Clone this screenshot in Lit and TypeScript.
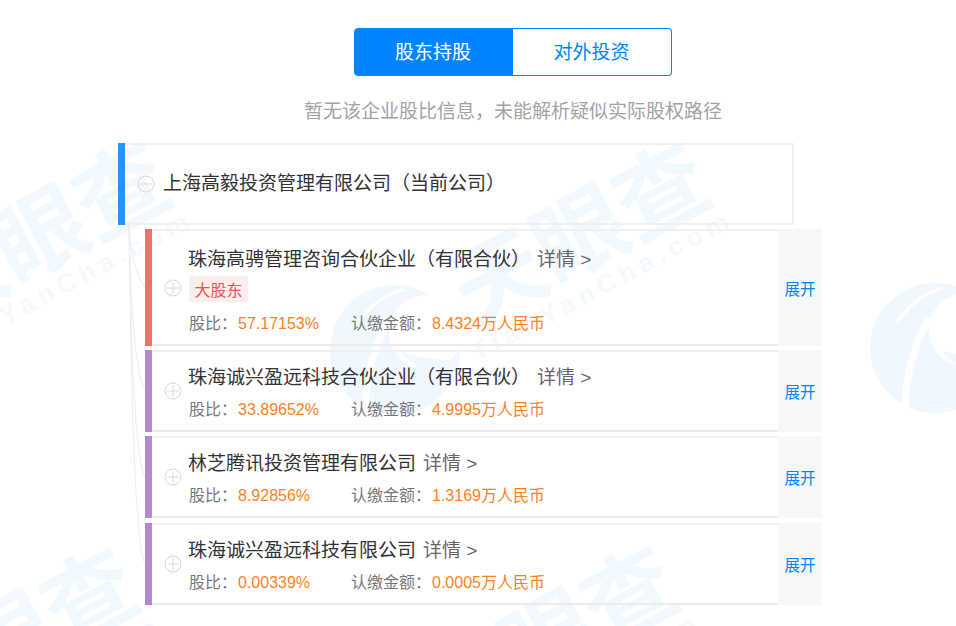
import { LitElement, html, css, svg } from "lit";
import { customElement } from "lit/decorators.js";

interface Row {
  name: string;
  ratio: string;
  amount: string;
  color: "red" | "purple";
  big?: boolean;
}

const ROWS: Row[] = [
  { name: "珠海高骋管理咨询合伙企业（有限合伙）", ratio: "57.17153%", amount: "8.4324万人民币", color: "red", big: true },
  { name: "珠海诚兴盈远科技合伙企业（有限合伙）", ratio: "33.89652%", amount: "4.9995万人民币", color: "purple" },
  { name: "林芝腾讯投资管理有限公司", ratio: "8.92856%", amount: "1.3169万人民币", color: "purple" },
  { name: "珠海诚兴盈远科技有限公司", ratio: "0.00339%", amount: "0.0005万人民币", color: "purple" },
];

const MARKS = [
  [43, 223],
  [583, 223],
  [11, 629],
  [551, 627],
];
const LOGOS = [
  [395, 350],
  [935, 348],
];
const LINES = [288, 391, 477, 564];

@customElement("app-root")
export class AppRoot extends LitElement {
  static styles = css`
    :host {
      display: block;
      position: relative;
      height: 626px;
      overflow: hidden;
      background: #fff;
      font-family: "Liberation Sans", "Noto Sans CJK SC", sans-serif;
    }
    .bg {
      position: absolute;
      left: 0;
      top: 0;
      pointer-events: none;
    }
    .mark-main {
      font-size: 92px;
      font-weight: 700;
      fill: #f1f8fe;
      text-anchor: middle;
    }
    .mark-url {
      font-size: 26px;
      font-weight: 700;
      letter-spacing: 6px;
      fill: #f3f9fe;
      text-anchor: middle;
    }
    .page {
      position: relative;
      padding-top: 28px;
    }
    .head {
      width: 718px;
      margin-left: 154px;
      display: flex;
      flex-direction: column;
      align-items: center;
    }
    .tabs {
      display: flex;
      width: 318px;
      height: 48px;
    }
    .tab {
      display: flex;
      align-items: center;
      justify-content: center;
      font-size: 19px;
      box-sizing: border-box;
      border: 1px solid #0084ff;
      padding-bottom: 4px;
    }
    .tab.on {
      width: 159px;
      padding-right: 1px;
      background: #0084ff;
      color: #fff;
      border-radius: 4px 0 0 4px;
    }
    .tab.off {
      width: 159px;
      padding-right: 1px;
      color: #0084ff;
      border-left: 0;
      border-radius: 0 4px 4px 0;
    }
    .tip {
      margin-top: 23px;
      font-size: 19px;
      line-height: 26px;
      color: #a3a3a3;
      white-space: nowrap;
    }
    .tree {
      margin: 18px 0 0 118px;
      width: 704px;
    }
    .root {
      width: 676px;
      height: 82px;
      box-sizing: border-box;
      display: flex;
      align-items: stretch;
      border: 2px solid #f0f0f0;
      border-left: 0;
      color: #333;
      font-size: 19px;
    }
    .root-bar {
      flex: none;
      width: 7px;
      margin: -2px 0;
      background: #2196ff;
    }
    .root-main {
      flex: 1;
      display: flex;
      align-items: center;
      gap: 8px;
      padding-left: 12px;
    }
    .root-main span {
      margin-bottom: 5px;
    }
    .toggle {
      flex: none;
      width: 18px;
      height: 18px;
    }
    .toggle circle,
    .toggle path {
      fill: none;
      stroke: #d8d8d8;
      stroke-width: 1;
    }
    .items {
      margin: 4px 0 0 27px;
      width: 677px;
      display: flex;
      flex-direction: column;
      gap: 4px;
    }
    .item {
      display: flex;
      align-items: stretch;
      border-top: 2px solid #f0f0f0;
      border-bottom: 2px solid #ebebeb;
      box-sizing: border-box;
      height: 82px;
    }
    .item.big {
      height: 117px;
    }
    .item:last-child {
      margin-top: 1px;
    }
    .bar {
      flex: none;
      width: 7px;
      margin: -2px 0;
    }
    .bar.red {
      background: #e87566;
    }
    .bar.purple {
      background: #b489d4;
    }
    .side {
      flex: none;
      width: 37px;
      display: flex;
      align-items: center;
      justify-content: center;
      padding-left: 4px;
      box-sizing: border-box;
    }
    .body {
      flex: 1;
      padding-top: 13px;
    }
    .big .body {
      padding-top: 16px;
    }
    .title {
      display: flex;
      gap: 7px;
      margin-left: -1px;
      font-size: 19px;
      line-height: 26px;
      color: #333;
      white-space: nowrap;
    }
    .more {
      color: #666;
    }
    .tag {
      display: flex;
      align-items: center;
      justify-content: center;
      width: 59px;
      height: 26px;
      margin-top: 3px;
      border-radius: 2px;
      background: #fdeeed;
      color: #e5574d;
      font-size: 16px;
    }
    .meta {
      display: flex;
      margin-top: 6px;
      font-size: 16px;
      line-height: 26px;
      color: #777;
      white-space: nowrap;
    }
    .big .meta {
      margin-top: 9px;
    }
    .cell {
      width: 162px;
    }
    .val {
      color: #ff7f24;
      margin-left: 1px;
    }
    .open {
      flex: none;
      width: 44px;
      margin: -2px 0;
      display: flex;
      align-items: center;
      justify-content: center;
      background: #f6f7f9;
      color: #0084ff;
      font-size: 15.5px;
    }
  `;

  private toggle(open: boolean) {
    return html`<svg class="toggle" viewBox="0 0 18 18">
      <circle cx="9" cy="9" r="8"></circle>
      <path d=${open ? "M3 9H15" : "M3 9H15M9 3V15"}></path>
    </svg>`;
  }

  private background() {
    return html`<svg class="bg" width="956" height="626" viewBox="0 0 956 626">
      ${MARKS.map(
        ([x, y]) => svg`<g transform="translate(${x} ${y}) rotate(-28)">
          <text class="mark-main" x="-8" y="42">天眼查</text>
          <text class="mark-url" x="-12" y="73">TianYanCha.com</text>
        </g>`
      )}
      ${LOGOS.map(
        ([x, y]) => svg`<g transform="translate(${x} ${y})">
          <circle r="65" fill="#f0f7fe"></circle>
          <circle cx="31" cy="-18" r="37" fill="#fff"></circle>
          <path d="M-38 -26Q-18 -54 8 -60" fill="none" stroke="#fff" stroke-width="3"></path>
          <path d="M-6 -30C-20 -6 -29 24 -30 62" fill="none" stroke="#fff" stroke-width="7"></path>
          <path d="M6 2Q22 24 60 30L65 10Q40 12 6 2Z" fill="#f0f7fe"></path>
        </g>`
      )}
      ${LINES.map(
        (y) => svg`<path d="M129 224C131 ${224 + (y - 224) * 0.55} 136 ${y - 16} 145 ${y}"
          fill="none" stroke="#ededed" stroke-width="1"></path>`
      )}
    </svg>`;
  }

  render() {
    return html`
      ${this.background()}
      <div class="page">
        <div class="head">
          <div class="tabs">
            <div class="tab on">股东持股</div>
            <div class="tab off">对外投资</div>
          </div>
          <div class="tip">暂无该企业股比信息，未能解析疑似实际股权路径</div>
        </div>
        <div class="tree">
          <div class="root">
            <div class="root-bar"></div>
            <div class="root-main">
              ${this.toggle(true)}
              <span>上海高毅投资管理有限公司（当前公司）</span>
            </div>
          </div>
          <div class="items">
            ${ROWS.map(
              (r) => html`<div class="item ${r.big ? "big" : ""}">
                <div class="bar ${r.color}"></div>
                <div class="side">${this.toggle(false)}</div>
                <div class="body">
                  <div class="title">
                    <span>${r.name}</span><span class="more">详情 &gt;</span>
                  </div>
                  ${r.big ? html`<div class="tag">大股东</div>` : ""}
                  <div class="meta">
                    <span class="cell">股比：<span class="val">${r.ratio}</span></span>
                    <span>认缴金额：<span class="val">${r.amount}</span></span>
                  </div>
                </div>
                <div class="open">展开</div>
              </div>`
            )}
          </div>
        </div>
      </div>
    `;
  }
}
